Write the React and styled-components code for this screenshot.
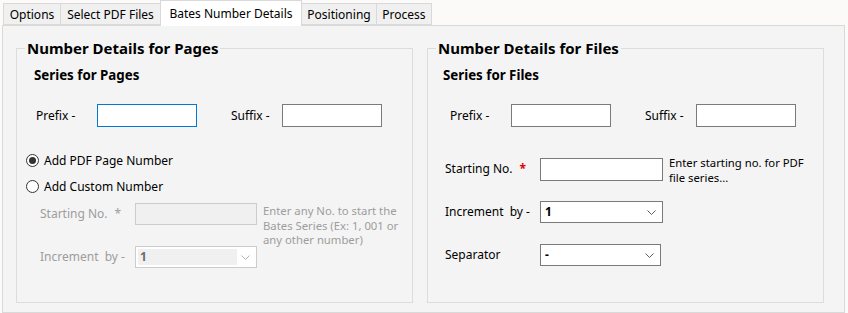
import React from 'react';
import styled, { createGlobalStyle } from 'styled-components';

const GlobalStyle = createGlobalStyle`
  body {
    margin: 0;
    background: #fcfaf9;
    font-family: "Noto Sans", "Open Sans", sans-serif;
  }
`;

const TABS = [
  { label: 'Options', width: 58 },
  { label: 'Select PDF Files', width: 101 },
  { label: 'Bates Number Details', width: 142, active: true },
  { label: 'Positioning', width: 76 },
  { label: 'Process', width: 56 },
];

const Chevron = () => (
  <svg width="9" height="5" viewBox="0 0 9 5" fill="none">
    <path d="M0.5 0.5 L4.5 4.5 L8.5 0.5" stroke="currentColor" strokeWidth="1" />
  </svg>
);

const App = () => {
  return (
    <Window>
      <GlobalStyle />
      <TabBar>
        {TABS.map((tab) => (
          <Tab key={tab.label} $width={tab.width} $active={tab.active}>
            {tab.label}
          </Tab>
        ))}
      </TabBar>
      <Panel>
        <GroupBox>
          <Legend>Number Details for Pages</Legend>
          <SeriesTitle $indent={17}>Series for Pages</SeriesTitle>
          <FieldRow $indent={19}>
            <FieldLabel $width={61}>Prefix -</FieldLabel>
            <TextBox $focused />
            <Spacer />
            <FieldLabel $width={51}>Suffix -</FieldLabel>
            <TextBox />
          </FieldRow>
          <RadioRow $top={24}>
            <Radio $checked />
            Add PDF Page Number
          </RadioRow>
          <RadioRow $top={8}>
            <Radio />
            Add Custom Number
          </RadioRow>
          <DetailGrid $indent={23} $top={8}>
            <GridLabel $disabled>
              Starting No.<Star $disabled>*</Star>
            </GridLabel>
            <TextBox $disabled $width={122} $height={22} />
            <Helper $disabled $offset={1}>
              Enter any No. to start the
              <br />
              Bates Series (Ex: 1, 001 or
              <br />
              any other number)
            </Helper>
            <GridLabel $disabled>Increment&nbsp; by -</GridLabel>
            <Combo $disabled $width={122}>
              <ComboValue $disabled>1</ComboValue>
              <ComboArrow $disabled>
                <Chevron />
              </ComboArrow>
            </Combo>
          </DetailGrid>
        </GroupBox>

        <GroupBox>
          <Legend>Number Details for Files</Legend>
          <SeriesTitle $indent={15}>Series for Files</SeriesTitle>
          <FieldRow $indent={22}>
            <FieldLabel $width={61}>Prefix -</FieldLabel>
            <TextBox />
            <Spacer />
            <FieldLabel $width={51}>Suffix -</FieldLabel>
            <TextBox />
          </FieldRow>
          <DetailGrid $indent={17} $top={31}>
            <GridLabel>
              Starting No.<Star>*</Star>
            </GridLabel>
            <TextBox $width={123} $height={23} />
            <Helper $offset={-2}>
              Enter starting no. for PDF
              <br />
              file series...
            </Helper>
            <GridLabel>Increment&nbsp; by -</GridLabel>
            <Combo $width={123}>
              <ComboValue>1</ComboValue>
              <ComboArrow>
                <Chevron />
              </ComboArrow>
            </Combo>
            <GridLabel>Separator</GridLabel>
            <Combo $width={121}>
              <ComboValue>-</ComboValue>
              <ComboArrow>
                <Chevron />
              </ComboArrow>
            </Combo>
          </DetailGrid>
        </GroupBox>
      </Panel>
    </Window>
  );
};

const Window = styled.div`
  width: 848px;
  height: 313px;
  overflow: hidden;
  box-sizing: border-box;
  padding-left: 2px;
  display: flex;
  flex-direction: column;
  background: #fcfaf9;
  color: #000;
  font-size: 12px;
`;

const TabBar = styled.div`
  display: flex;
  align-items: flex-end;
  height: 25px;
  padding-left: 1px;
  position: relative;
  z-index: 1;
`;

const Tab = styled.div`
  box-sizing: border-box;
  width: ${(p) => p.$width}px;
  height: ${(p) => (p.$active ? 26 : 22)}px;
  margin-left: -1px;
  margin-bottom: ${(p) => (p.$active ? -1 : 0)}px;
  padding-bottom: ${(p) => (p.$active ? 1 : 0)}px;
  display: flex;
  align-items: center;
  justify-content: center;
  border: 1px solid #d9d9d9;
  border-bottom: ${(p) => (p.$active ? 'none' : '1px solid #d9d9d9')};
  background: ${(p) => (p.$active ? '#ffffff' : '#f0f0f0')};
  white-space: nowrap;
  position: relative;
  z-index: ${(p) => (p.$active ? 2 : 1)};

  &:first-child {
    margin-left: 0;
  }
`;

const Panel = styled.div`
  flex: 1;
  width: 843px;
  box-sizing: border-box;
  border: 1px solid #d9d9d9;
  background: #f4f4f4;
  padding: 13px 0 0 13px;
  display: flex;
  gap: 14px;
  align-items: flex-start;
`;

const GroupBox = styled.fieldset`
  box-sizing: border-box;
  width: 397px;
  height: 264px;
  margin: 0;
  padding: 0;
  min-width: 0;
  border: 1px solid #dcdcdc;
  display: flex;
  flex-direction: column;
  align-items: flex-start;
`;

const Legend = styled.legend`
  margin-left: 8px;
  padding: 0 2px;
  font-size: 15px;
  font-weight: 700;
  line-height: 18px;
`;

const SeriesTitle = styled.div`
  margin: 9px 0 0 ${(p) => p.$indent}px;
  font-size: 13.3px;
  font-weight: 700;
  line-height: 18px;
`;

const FieldRow = styled.div`
  display: flex;
  align-items: center;
  height: 23px;
  margin: 20px 0 0 ${(p) => p.$indent}px;
`;

const FieldLabel = styled.span`
  width: ${(p) => p.$width}px;
  flex-shrink: 0;
`;

const Spacer = styled.span`
  width: 34px;
`;

const TextBox = styled.div`
  box-sizing: border-box;
  width: ${(p) => p.$width || 100}px;
  height: ${(p) => p.$height || 23}px;
  border: 1px solid
    ${(p) => (p.$focused ? '#0078d7' : p.$disabled ? '#cccccc' : '#7a7a7a')};
  background: ${(p) => (p.$disabled ? '#f0f0f0' : '#ffffff')};
`;

const RadioRow = styled.label`
  display: flex;
  align-items: center;
  gap: 5px;
  height: 18px;
  margin: ${(p) => p.$top}px 0 0 9px;
`;

const Radio = styled.span`
  box-sizing: border-box;
  width: 13px;
  height: 13px;
  border: 1px solid #333333;
  border-radius: 50%;
  background: #ffffff;
  display: flex;
  align-items: center;
  justify-content: center;

  &::after {
    content: '';
    width: 7px;
    height: 7px;
    border-radius: 50%;
    background: #333333;
    display: ${(p) => (p.$checked ? 'block' : 'none')};
  }
`;

const DetailGrid = styled.div`
  display: grid;
  grid-template-columns: 95px auto auto;
  grid-auto-rows: 22px;
  row-gap: 21px;
  margin: ${(p) => p.$top}px 0 0 ${(p) => p.$indent}px;
`;

const GridLabel = styled.div`
  grid-column: 1;
  line-height: 22px;
  white-space: nowrap;
  color: ${(p) => (p.$disabled ? '#9d9d9d' : '#000000')};
`;

const Star = styled.span`
  margin-left: 7px;
  font-weight: ${(p) => (p.$disabled ? 400 : 700)};
  color: ${(p) => (p.$disabled ? '#9d9d9d' : '#e00000')};
`;

const Helper = styled.div`
  grid-column: 3;
  grid-row: 1 / span 2;
  align-self: start;
  margin: ${(p) => p.$offset}px 0 0 6px;
  font-size: 11.3px;
  line-height: 14.5px;
  white-space: nowrap;
  color: ${(p) => (p.$disabled ? '#9d9d9d' : '#000000')};
`;

const Combo = styled.div`
  grid-column: 2;
  box-sizing: border-box;
  width: ${(p) => p.$width}px;
  height: 22px;
  padding: 2px;
  display: flex;
  border: 1px solid ${(p) => (p.$disabled ? '#cccccc' : '#7a7a7a')};
  background: #ffffff;
`;

const ComboValue = styled.div`
  flex: 1;
  padding-left: 2px;
  line-height: 16px;
  font-weight: 700;
  background: ${(p) => (p.$disabled ? '#f0f0f0' : 'transparent')};
  color: ${(p) => (p.$disabled ? '#6d6d6d' : '#000000')};
`;

const ComboArrow = styled.div`
  width: 17px;
  display: flex;
  align-items: center;
  justify-content: center;
  color: ${(p) => (p.$disabled ? '#b5b5b5' : '#606060')};
`;

export default App;
